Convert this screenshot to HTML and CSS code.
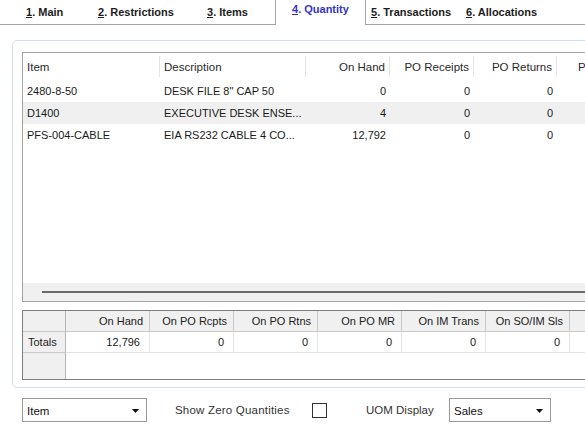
FILE: index.html
```html
<!DOCTYPE html>
<html>
<head>
<meta charset="utf-8">
<link rel="stylesheet" href="styles.css">
</head>
<body>
<div class="window">
  <nav class="tabs">
    <div class="tab-group left">
      <span class="tab t1"><u>1</u>. Main</span>
      <span class="tab t2"><u>2</u>. Restrictions</span>
      <span class="tab"><u>3</u>. Items</span>
    </div>
    <div class="tab active"><u>4</u>. Quantity</div>
    <div class="tab-group right">
      <span class="tab t5"><u>5</u>. Transactions</span>
      <span class="tab"><u>6</u>. Allocations</span>
    </div>
  </nav>

  <section class="panel">
    <div class="list">
      <div class="row head">
        <div class="cell">Item</div>
        <div class="cell">Description</div>
        <div class="cell num">On Hand</div>
        <div class="cell num">PO Receipts</div>
        <div class="cell num">PO Returns</div>
        <div class="cell num">PO Issues</div>
      </div>
      <div class="row">
        <div class="cell">2480-8-50</div>
        <div class="cell">DESK FILE 8" CAP 50</div>
        <div class="cell num">0</div>
        <div class="cell num">0</div>
        <div class="cell num">0</div>
        <div class="cell num"></div>
      </div>
      <div class="row alt">
        <div class="cell">D1400</div>
        <div class="cell">EXECUTIVE DESK ENSE...</div>
        <div class="cell num">4</div>
        <div class="cell num">0</div>
        <div class="cell num">0</div>
        <div class="cell num"></div>
      </div>
      <div class="row">
        <div class="cell">PFS-004-CABLE</div>
        <div class="cell">EIA RS232 CABLE 4 CO...</div>
        <div class="cell num">12,792</div>
        <div class="cell num">0</div>
        <div class="cell num">0</div>
        <div class="cell num"></div>
      </div>
      <div class="list-fill"></div>
      <div class="hscroll"><div class="thumb"></div></div>
    </div>

    <div class="totals">
      <div class="trow thead">
        <div class="tcell label"></div>
        <div class="tcell">On Hand</div>
        <div class="tcell">On PO Rcpts</div>
        <div class="tcell">On PO Rtns</div>
        <div class="tcell">On PO MR</div>
        <div class="tcell">On IM Trans</div>
        <div class="tcell">On SO/IM Sls</div>
        <div class="tcell"></div>
      </div>
      <div class="trow tdata">
        <div class="tcell label">Totals</div>
        <div class="tcell">12,796</div>
        <div class="tcell">0</div>
        <div class="tcell">0</div>
        <div class="tcell">0</div>
        <div class="tcell">0</div>
        <div class="tcell">0</div>
        <div class="tcell"></div>
      </div>
      <div class="trow tempty">
        <div class="tcell label"></div>
        <div class="tcell blank"></div>
      </div>
    </div>
  </section>

  <div class="controls">
    <div class="select sel-item">
      <span>Item</span>
      <svg class="caret" width="7" height="4" viewBox="0 0 7 4"><path d="M0 0H7L3.5 4Z" fill="#111"/></svg>
    </div>
    <span class="ctl-label zero">Show Zero Quantities</span>
    <span class="checkbox"></span>
    <span class="ctl-label uom">UOM Display</span>
    <div class="select sel-uom">
      <span>Sales</span>
      <svg class="caret" width="7" height="4" viewBox="0 0 7 4"><path d="M0 0H7L3.5 4Z" fill="#111"/></svg>
    </div>
  </div>
</div>
</body>
</html>
```

FILE: styles.css
```css
html, body {
  margin: 0;
  padding: 0;
  background: #ffffff;
}
body {
  width: 585px;
  height: 437px;
  overflow: hidden;
  font-family: "Liberation Sans", Arial, sans-serif;
  font-size: 11px;
  color: #1a1a1a;
}
.window {
  width: 585px;
}

/* Tabs */
.tabs {
  display: flex;
  height: 25px;
}
.tab-group {
  display: flex;
  align-items: center;
  box-sizing: border-box;
  height: 25px;
  border-bottom: 1px solid #a3a3a3;
}
.tab {
  font-size: 11px;
  font-weight: bold;
  color: #1c1c1c;
  white-space: nowrap;
}
.tab u {
  text-decoration: underline;
}
.left {
  width: 276px;
  border-right: 1px solid #a3a3a3;
  padding-left: 26px;
}
.t1 { width: 72px; }
.t2 { width: 109px; }
.active {
  box-sizing: border-box;
  width: 89px;
  padding: 3px 0 0 16px;
  color: #3434c6;
}
.right {
  flex: 1;
  border-left: 1px solid #a3a3a3;
  padding-left: 5px;
}
.t5 { width: 95px; }

/* Panel */
.panel {
  width: 640px;
  margin: 15px 0 0 12px;
  border: 1px solid #d6dee7;
  border-radius: 5px;
  padding: 11px 0 7px 9px;
}

/* List */
.list {
  box-sizing: border-box;
  height: 250px;
  border: 1px solid #a3a3a3;
  display: flex;
  flex-direction: column;
  width: 630px;
}
.row {
  display: grid;
  grid-template-columns: 137px 146px 84px 84px 83px 78px;
  height: 22px;
  align-items: center;
}
.row.head {
  height: 27px;
  color: #2a2a2a;
  font-size: 11.5px;
}
.row.alt {
  background: #f0f0f0;
}
.cell {
  box-sizing: border-box;
  padding: 0 4px 0 4px;
  white-space: nowrap;
  overflow: hidden;
}
.cell.num {
  text-align: right;
  padding-right: 4px;
}
.head .cell {
  height: 21px;
  line-height: 22px;
  border-right: 1px solid #e4e4e4;
}
.head .cell:last-child {
  border-right: none;
}
.list-fill {
  flex: 1;
}
.hscroll {
  height: 18px;
  background: #f0f0f0;
  display: flex;
  align-items: center;
  padding-left: 19px;
}
.thumb {
  flex: 1;
  height: 2px;
  background: #6a6a6a;
}

/* Totals */
.totals {
  box-sizing: border-box;
  margin-top: 8px;
  width: 630px;
  height: 70px;
  border: 1px solid #7d7d7d;
  display: flex;
  flex-direction: column;
}
.trow {
  display: grid;
  grid-template-columns: 43px 84px 84px 84px 84px 84px 84px 80px;
  height: 21px;
}
.tcell {
  box-sizing: border-box;
  text-align: right;
  padding-right: 6px;
  line-height: 20px;
  white-space: nowrap;
  overflow: hidden;
}
.thead .tcell {
  background: #f0f0f0;
  border-right: 1px solid #c9c9c9;
  border-bottom: 1px solid #c9c9c9;
  color: #222;
}
.tdata .tcell {
  border-right: 1px solid #e3e3e3;
  border-bottom: 1px solid #e3e3e3;
  padding-right: 9px;
}
.tcell.label {
  background: #f0f0f0;
  text-align: left;
  padding: 0 0 0 5px;
  border-right: 1px solid #b5b5b5;
}
.tdata .tcell.label {
  border-right: 1px solid #b5b5b5;
  border-bottom: 1px solid #c9c9c9;
  color: #222;
  padding-right: 0;
}
.tempty {
  flex: 1;
  grid-template-columns: 43px 1fr;
}
.tempty .tcell.label {
  border-bottom: none;
}

/* Bottom controls */
.controls {
  display: flex;
  align-items: center;
  height: 24px;
  margin-top: 10px;
  padding-left: 22px;
  font-size: 11.5px;
}
.select {
  box-sizing: border-box;
  height: 24px;
  border: 1px solid #9a9a9a;
  background: #fff;
  display: flex;
  align-items: center;
  justify-content: space-between;
  padding: 2px 7px 0 4px;
  color: #111;
}
.sel-item {
  width: 125px;
}
.sel-uom {
  width: 102px;
}
.caret {
  display: block;
}
.ctl-label {
  color: #333;
  white-space: nowrap;
}
.zero {
  margin-left: 28px;
  width: 115px;
  letter-spacing: 0.2px;
}
.checkbox {
  box-sizing: border-box;
  width: 15px;
  height: 15px;
  border: 1px solid #333;
  background: #fff;
  margin-left: 22px;
}
.uom {
  margin-left: 39px;
  width: 66px;
}
.sel-uom {
  margin-left: 17px;
}
```
